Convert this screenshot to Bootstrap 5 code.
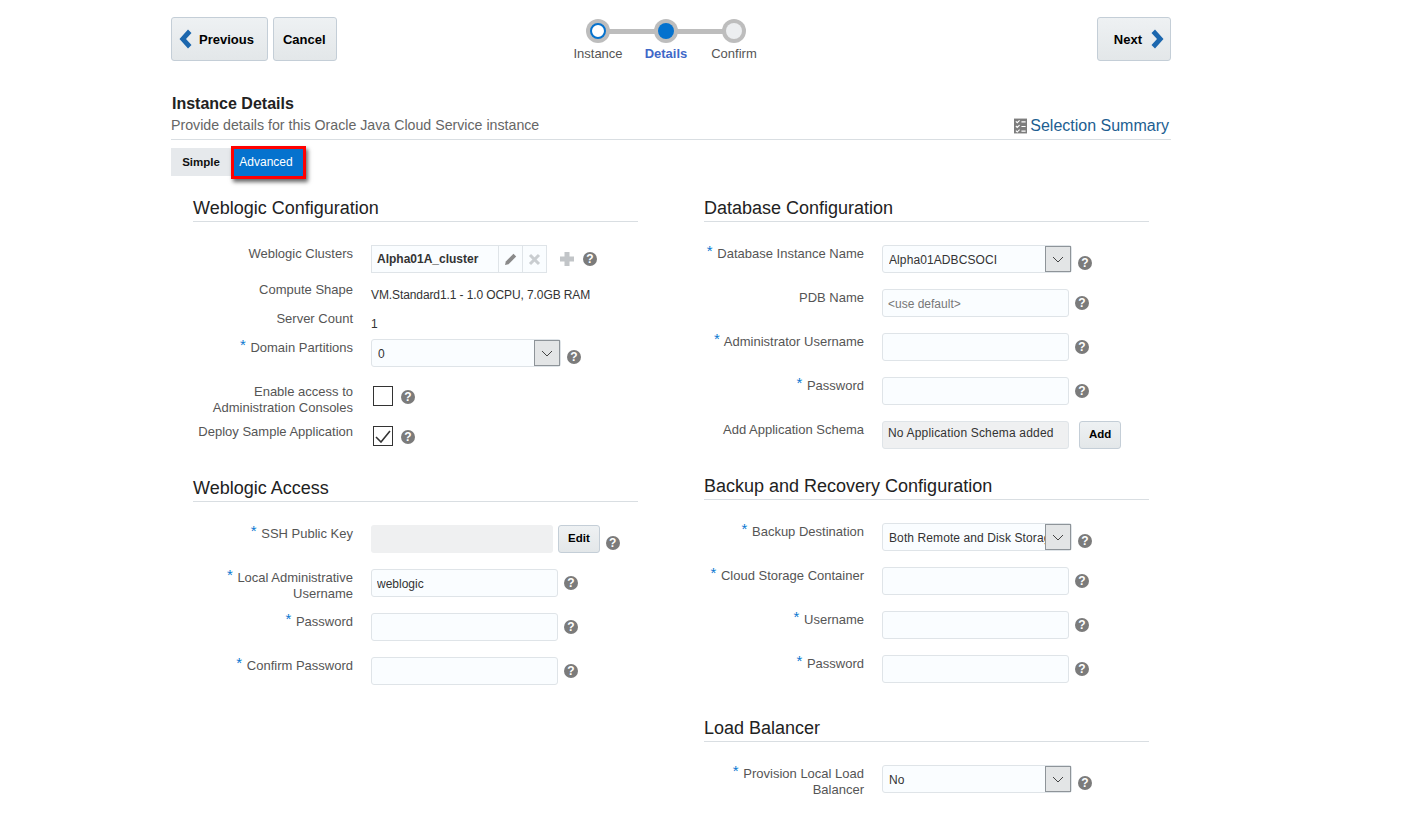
<!DOCTYPE html>
<html lang="en">
<head>
    <meta charset="UTF-8">
    <title>Instance Details</title>
    <link href="https://cdn.jsdelivr.net/npm/bootstrap@5.3.3/dist/css/bootstrap.min.css" rel="stylesheet">
    <script src="https://cdn.jsdelivr.net/npm/bootstrap@5.3.3/dist/js/bootstrap.bundle.min.js"></script>
    <style>
        body {
            font-family: "Liberation Sans", Arial, sans-serif;
            font-size: 12px;
            color: #333;
            background: #fff;
        }

        .page-wrap {
            width: 1000px;
            margin-left: 171px;
            padding-top: 17px;
        }

        .top-left {
            width: 393px;
            gap: 5px;
        }

        .wiz-btn {
            height: 44px;
            font-size: 13px;
            font-weight: 700;
            color: #000;
            background: linear-gradient(#eef1f3, #e3e7e9);
            border: 1px solid #c4ced7;
            border-radius: 3px;
            padding: 2px 10px 0 9px;
        }

        .wiz-prev {
            padding: 2px 13px 0 7px;
            gap: 6px;
        }

        .wiz-next {
            padding: 2px 6px 0 16px;
            gap: 8px;
        }

        .wiz-btn svg {
            width: 14px;
            height: 20px;
            margin-top: -2px;
            fill: #1c67ae;
        }

        .train-step {
            width: 68px;
            position: relative;
            color: #555;
            text-align: center;
            font-size: 13px;
            line-height: 16px;
        }

        .train-step.is-current {
            color: #3f68c8;
            font-weight: 700;
        }

        .train-dot {
            width: 24px;
            height: 24px;
            margin: 2px auto 3px;
            border-radius: 50%;
            background: #bdbdbd;
            display: flex;
            align-items: center;
            justify-content: center;
            position: relative;
            z-index: 1;
        }

        .train-dot i {
            display: block;
            width: 16px;
            height: 16px;
            border-radius: 50%;
        }

        .train-step + .train-step::before {
            content: "";
            position: absolute;
            left: -34px;
            width: 68px;
            top: 12px;
            height: 5px;
            background: #bdbdbd;
        }

        .dot-done { background: #fff; border: 2px solid #0572ce; }
        .dot-now { background: #0572ce; }
        .dot-next { background: #eceef0; }

        .title-block {
            margin-top: 33px;
            border-bottom: 1px solid #d9dee2;
            height: 45px;
        }

        .title-main {
            font-size: 16px;
            font-weight: 700;
            color: #222;
            line-height: 18px;
            padding: 0 0 0 1px;
            margin: 0;
        }

        .title-sub {
            font-size: 14.2px;
            color: #666;
            line-height: 18px;
            margin-top: 3px;
            margin-bottom: 5px;
        }

        .summary-link {
            font-size: 16px;
            color: #215e91;
            text-decoration: none;
            line-height: 18px;
            margin-right: 2px;
            gap: 3px;
        }

        .tab-row {
            margin-top: 8px;
            height: 28px;
        }

        .tab-simple {
            width: 60px;
            height: 28px;
            background: #e6e9ec;
            color: #111;
            font-weight: 700;
            font-size: 11.5px;
            line-height: 28px;
            text-align: center;
        }

        .tab-adv {
            width: 75px;
            height: 33px;
            margin-top: -2px;
            padding-right: 5px;
            background: #0572ce;
            color: #fff;
            font-size: 12px;
            line-height: 27px;
            text-align: center;
            border: 3px solid #f00;
            box-shadow: 2px 3px 4px rgba(0, 0, 0, .6);
        }

        .form-cols {
            margin-left: 22px;
            margin-top: 22px;
            gap: 66px;
        }

        .form-col {
            width: 445px;
        }

        .sect-head {
            font-size: 18px;
            font-weight: 400;
            color: #222;
            line-height: 20px;
            margin: 0;
            height: 24px;
            border-bottom: 1px solid #d9dee2;
        }

        .sect-gap {
            margin-top: 27px;
        }

        .sect-gap-lb {
            margin-top: 35px;
        }

        .sect-body {
            padding-top: 23px;
        }

        .fld-row {
            display: flex;
            height: 28px;
            margin-bottom: 16px;
        }

        .fld-row-thin {
            height: 21px;
            margin-bottom: 8px;
        }

        .fld-row-tight {
            margin-bottom: 8px;
        }

        .fld-row-two {
            margin-bottom: 12px;
        }

        .fld-label {
            width: 160px;
            margin-right: 18px;
            padding-top: 1px;
            flex: none;
            text-align: right;
            font-size: 13px;
            line-height: 16px;
            color: #555;
        }

        .fld-label b {
            color: #0a78d1;
            font-weight: 400;
            font-size: 15px;
            line-height: 0;
            position: relative;
            top: -2px;
            margin-right: 1px;
        }

        .fld-input {
            width: 187px;
            height: 28px;
            flex: none;
            font-size: 12px;
            padding: 1px 5px 0;
            border: 1px solid #dfe4e8;
            border-radius: 3px;
            background: #fafdff;
            color: #333;
            box-shadow: none;
        }

        .fld-input::placeholder {
            color: #777;
        }

        .fld-ro {
            background: #eff0f1;
            line-height: 20px;
            letter-spacing: .18px;
        }

        .fld-key {
            width: 182px;
            border: 0;
        }

        .combo {
            width: 190px;
            height: 28px;
            flex: none;
            display: flex;
            border: 1px solid #dfe4e8;
            border-radius: 3px;
            background: #fafdff;
        }

        .combo input {
            border: 0;
            background: transparent;
            flex: 1;
            min-width: 0;
            font-size: 12px;
            letter-spacing: .1px;
            padding: 1px 0 0 6px;
            color: #333;
            outline: 0;
        }

        .combo span {
            width: 26px;
            flex: none;
            background: #e3e5e6;
            border: 1px solid #8e9499;
            display: flex;
            align-items: center;
            justify-content: center;
        }

        .combo svg {
            width: 12px;
            height: 7px;
            fill: none;
            stroke: #444;
        }

        .help-dot {
            width: 14px;
            height: 14px;
            flex: none;
            border-radius: 50%;
            background: #7b7b7b;
            color: #fff;
            font-size: 12px;
            font-weight: 700;
            line-height: 14px;
            text-align: center;
            margin-left: 6px;
        }

        .help-low {
            margin-top: 11px;
        }

        .help-mid {
            margin-top: 7px;
        }

        .help-tick {
            margin-left: 8px;
        }

        .plain-val {
            color: #333;
            font-size: 12px;
            letter-spacing: -.1px;
            line-height: 16px;
            margin-top: 6px;
        }

        .plain-val-up {
            margin-top: 6px;
        }

        .tick-box {
            width: 20px;
            height: 20px;
            flex: none;
            margin: 3px 0 0 2px;
            border: 1px solid #333;
            background: #fff;
            display: flex;
            align-items: center;
            justify-content: center;
        }

        .tick-box svg {
            width: 16px;
            height: 13px;
            fill: none;
            stroke: #333;
            stroke-width: 1.6;
        }

        .cluster-box {
            width: 176px;
            height: 28px;
            flex: none;
            display: flex;
            border: 1px solid #dfe4e8;
            background: #fafdff;
        }

        .cluster-box strong {
            flex: 1;
            padding-left: 5px;
            line-height: 26px;
            font-size: 12px;
            color: #333;
        }

        .cluster-box span {
            width: 24px;
            flex: none;
            border-left: 1px solid #dfe4e8;
            display: flex;
            align-items: center;
            justify-content: center;
        }

        .plus-icon {
            margin: 4px 7px 0 11px;
            flex: none;
        }

        .help-plus {
            margin-left: 0;
        }

        .small-btn {
            height: 28px;
            font-size: 11.5px;
            font-weight: 700;
            color: #000;
            background: linear-gradient(#eef1f3, #e3e7e9);
            border: 1px solid #c4ced7;
            border-radius: 3px;
            padding: 0 9px;
            margin-left: 5px;
            flex: none;
        }

        .small-btn-add {
            margin-left: 10px;
        }
    </style>
</head>
<body>
    <div class="page-wrap">
        <div class="d-flex">
            <div class="top-left d-flex">
                <button class="wiz-btn wiz-prev d-flex align-items-center" type="button">
                    <svg viewBox="0 0 14 20"><path d="M9 0.500 12.500 4 7 10l5.500 6L9 19.500 0.500 10z"/></svg>Previous
                </button>
                <button class="wiz-btn" type="button">Cancel</button>
            </div>
            <div class="d-flex">
                <div class="train-step"><div class="train-dot"><i class="dot-done"></i></div>Instance</div>
                <div class="train-step is-current"><div class="train-dot"><i class="dot-now"></i></div>Details</div>
                <div class="train-step"><div class="train-dot"><i class="dot-next"></i></div>Confirm</div>
            </div>
            <button class="wiz-btn wiz-next d-flex align-items-center ms-auto" type="button">
                Next<svg viewBox="0 0 14 20"><path d="M5 0.500 13.500 10 5 19.500 1.500 16 7 10 1.500 4z"/></svg>
            </button>
        </div>

        <div class="title-block d-flex justify-content-between align-items-end">
            <div>
                <h1 class="title-main">Instance Details</h1>
                <div class="title-sub">Provide details for this Oracle Java Cloud Service instance</div>
            </div>
            <a class="summary-link d-flex align-items-center mb-1" href="#">
                <svg width="13" height="16" viewBox="0 0 14 16">
                    <rect width="14" height="16" fill="#7d7d7d"/>
                    <path d="M2 3l1.500 1.500L6 2M2 8l1.500 1.500L6 7M2 13l1.500 1.500L6 12" fill="none" stroke="#fff" stroke-width="1.200"/>
                    <path d="M8 3.500h4.500M8 8.500h4.500M8 13.500h4.500" stroke="#fff" stroke-width="1.200"/>
                </svg>Selection Summary
            </a>
        </div>

        <div class="tab-row d-flex">
            <div class="tab-simple">Simple</div>
            <div class="tab-adv">Advanced</div>
        </div>

        <div class="form-cols d-flex">
            <div class="form-col">
                <h2 class="sect-head">Weblogic Configuration</h2>
                <div class="sect-body">
                    <div class="fld-row fld-row-tight">
                        <div class="fld-label">Weblogic Clusters</div>
                        <div class="cluster-box">
                            <strong>Alpha01A_cluster</strong>
                            <span><svg width="14" height="14" viewBox="0 0 14 14"><path d="M1 13l.8-3.500L9.500 1.800l2.700 2.700-7.700 7.700z" fill="#8a8a8a"/></svg></span>
                            <span><svg width="13" height="13" viewBox="0 0 13 13"><path d="M2 2l9 9M11 2l-9 9" stroke="#c9cdd0" stroke-width="3"/></svg></span>
                        </div>
                        <svg class="plus-icon" width="18" height="20" viewBox="0 0 18 20"><path d="M9 3v14M2 10h14" stroke="#c2c5c8" stroke-width="5"/></svg>
                        <span class="help-dot help-mid help-plus">?</span>
                    </div>
                    <div class="fld-row fld-row-thin">
                        <div class="fld-label">Compute Shape</div>
                        <div class="plain-val">VM.Standard1.1 - 1.0 OCPU, 7.0GB RAM</div>
                    </div>
                    <div class="fld-row fld-row-thin">
                        <div class="fld-label">Server Count</div>
                        <div class="plain-val plain-val-up">1</div>
                    </div>
                    <div class="fld-row">
                        <div class="fld-label"><b>*</b> Domain Partitions</div>
                        <div class="combo"><input type="text" value="0" readonly><span><svg viewBox="0 0 12 7"><path d="M1 1l5 5 5-5"/></svg></span></div>
                        <span class="help-dot help-low">?</span>
                    </div>
                    <div class="fld-row fld-row-two">
                        <div class="fld-label">Enable access to Administration Consoles</div>
                        <div class="tick-box"></div>
                        <span class="help-dot help-mid help-tick">?</span>
                    </div>
                    <div class="fld-row mb-0">
                        <div class="fld-label">Deploy Sample Application</div>
                        <div class="tick-box"><svg viewBox="0 0 16 13"><path d="M1 7l5 5L15 1"/></svg></div>
                        <span class="help-dot help-mid help-tick">?</span>
                    </div>
                </div>

                <h2 class="sect-head sect-gap">Weblogic Access</h2>
                <div class="sect-body">
                    <div class="fld-row">
                        <div class="fld-label"><b>*</b> SSH Public Key</div>
                        <div class="fld-input fld-ro fld-key"></div>
                        <button class="small-btn" type="button">Edit</button>
                        <span class="help-dot help-low">?</span>
                    </div>
                    <div class="fld-row">
                        <div class="fld-label"><b>*</b> Local Administrative Username</div>
                        <input class="fld-input" type="text" value="weblogic">
                        <span class="help-dot help-mid">?</span>
                    </div>
                    <div class="fld-row">
                        <div class="fld-label"><b>*</b> Password</div>
                        <input class="fld-input" type="text">
                        <span class="help-dot help-mid">?</span>
                    </div>
                    <div class="fld-row">
                        <div class="fld-label"><b>*</b> Confirm Password</div>
                        <input class="fld-input" type="text">
                        <span class="help-dot help-mid">?</span>
                    </div>
                </div>
            </div>

            <div class="form-col">
                <h2 class="sect-head">Database Configuration</h2>
                <div class="sect-body">
                    <div class="fld-row">
                        <div class="fld-label"><b>*</b> Database Instance Name</div>
                        <div class="combo"><input type="text" value="Alpha01ADBCSOCI" readonly><span><svg viewBox="0 0 12 7"><path d="M1 1l5 5 5-5"/></svg></span></div>
                        <span class="help-dot help-low">?</span>
                    </div>
                    <div class="fld-row">
                        <div class="fld-label">PDB Name</div>
                        <input class="fld-input" type="text" placeholder="<use default>">
                        <span class="help-dot help-mid">?</span>
                    </div>
                    <div class="fld-row">
                        <div class="fld-label"><b>*</b> Administrator Username</div>
                        <input class="fld-input" type="text">
                        <span class="help-dot help-mid">?</span>
                    </div>
                    <div class="fld-row">
                        <div class="fld-label"><b>*</b> Password</div>
                        <input class="fld-input" type="text">
                        <span class="help-dot help-mid">?</span>
                    </div>
                    <div class="fld-row mb-0">
                        <div class="fld-label">Add Application Schema</div>
                        <div class="fld-input fld-ro">No Application Schema added</div>
                        <button class="small-btn small-btn-add" type="button">Add</button>
                    </div>
                </div>

                <h2 class="sect-head sect-gap">Backup and Recovery Configuration</h2>
                <div class="sect-body">
                    <div class="fld-row">
                        <div class="fld-label"><b>*</b> Backup Destination</div>
                        <div class="combo"><input type="text" value="Both Remote and Disk Storage" readonly><span><svg viewBox="0 0 12 7"><path d="M1 1l5 5 5-5"/></svg></span></div>
                        <span class="help-dot help-low">?</span>
                    </div>
                    <div class="fld-row">
                        <div class="fld-label"><b>*</b> Cloud Storage Container</div>
                        <input class="fld-input" type="text">
                        <span class="help-dot help-mid">?</span>
                    </div>
                    <div class="fld-row">
                        <div class="fld-label"><b>*</b> Username</div>
                        <input class="fld-input" type="text">
                        <span class="help-dot help-mid">?</span>
                    </div>
                    <div class="fld-row mb-0">
                        <div class="fld-label"><b>*</b> Password</div>
                        <input class="fld-input" type="text">
                        <span class="help-dot help-mid">?</span>
                    </div>
                </div>

                <h2 class="sect-head sect-gap-lb">Load Balancer</h2>
                <div class="sect-body">
                    <div class="fld-row">
                        <div class="fld-label"><b>*</b> Provision Local Load Balancer</div>
                        <div class="combo"><input type="text" value="No" readonly><span><svg viewBox="0 0 12 7"><path d="M1 1l5 5 5-5"/></svg></span></div>
                        <span class="help-dot help-low">?</span>
                    </div>
                </div>
            </div>
        </div>
    </div>
</body>
</html>
